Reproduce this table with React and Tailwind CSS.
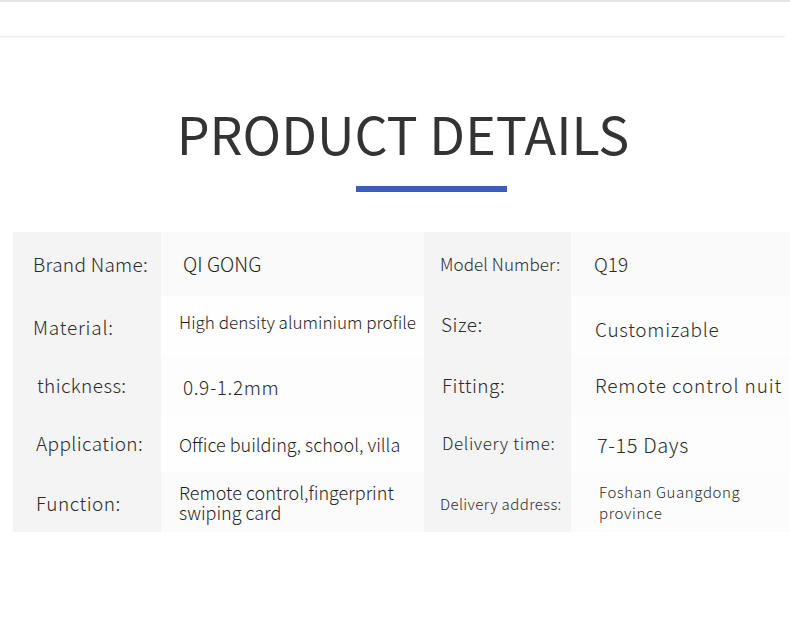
import React from "react";

const rows = [
  {
    h: "h-[64px]",
    bg: "bg-[#fafafa]",
    bg2: "bg-[#fafafa]",
    l1: <span className="pl-[20px] text-[19px] tracking-[0.3px]">Brand Name:</span>,
    v1: <span className="pl-[22px] text-[19.6px] text-[#1f1f1f]">QI GONG</span>,
    l2: <span className="pl-[16px] text-[17px] tracking-[0.1px]">Model Number:</span>,
    v2: <span className="pl-[23px] text-[19px]">Q19</span>,
  },
  {
    h: "h-[60px]",
    bg: "bg-[#fefefe]",
    bg2: "bg-[#fdfdfd]",
    l1: <span className="pl-[20px] pt-[2px] text-[19px] tracking-[0.8px]">Material:</span>,
    v1: <span className="pl-[18px] pb-[8px] text-[17.1px] text-[#1f1f1f]">High density aluminium profile</span>,
    l2: <span className="pl-[17px] pb-[4px] text-[19px] tracking-[0.5px]">Size:</span>,
    v2: <span className="pl-[24px] pt-[6px] text-[19px] tracking-[0.7px]">Customizable</span>,
  },
  {
    h: "h-[58px]",
    bg: "bg-[#fdfdfd]",
    bg2: "bg-[#fcfcfc]",
    l1: <span className="pl-[24px] text-[19px] tracking-[0.4px]">thickness:</span>,
    v1: <span className="pl-[22px] pt-[4px] text-[19px] tracking-[0.6px]">0.9-1.2mm</span>,
    l2: <span className="pl-[18px] text-[19px] tracking-[0.5px]">Fitting:</span>,
    v2: <span className="pl-[24px] text-[19px] tracking-[0.9px]">Remote control nuit</span>,
  },
  {
    h: "h-[58px]",
    bg: "bg-[#fefefe]",
    bg2: "bg-[#fdfdfd]",
    l1: <span className="pl-[23px] text-[19px] tracking-[0.4px]">Application:</span>,
    v1: <span className="pl-[18px] pt-[2px] text-[18px] text-[#1f1f1f]">Office building, school, villa</span>,
    l2: <span className="pl-[18px] text-[17px] tracking-[0.6px]">Delivery time:</span>,
    v2: <span className="pl-[26px] pt-[4px] text-[20px] tracking-[0.6px]">7-15 Days</span>,
  },
  {
    h: "h-[60px]",
    bg: "bg-[#fbfbfb]",
    bg2: "bg-[#fcfcfc]",
    l1: <span className="pl-[23px] pt-[2px] text-[19px] tracking-[0.5px]">Function:</span>,
    v1: (
      <span className="pl-[18px] text-[18px] leading-[20px] text-[#1f1f1f]">
        Remote control,fingerprint
        <br />
        swiping card
      </span>
    ),
    l2: <span className="pl-[16px] pt-[4px] text-[15px] tracking-[0.4px]">Delivery address:</span>,
    v2: (
      <span className="pl-[28px] text-[15px] leading-[21px] tracking-[0.6px]">
        Foshan Guangdong
        <br />
        province
      </span>
    ),
  },
];

export default function App() {
  return (
    <div
      className="w-[790px] h-[624px] bg-white text-[#2b2b2b] font-light overflow-hidden"
      style={{ fontFamily: '"Noto Sans CJK JP", "Noto Sans", sans-serif' }}
    >
      <div className="h-[2px] bg-[#e6e6e6]" />
      <div className="h-[34px]" />
      <div className="w-[785px] h-[2px] border-t border-[#ececec] border-b border-b-[#f7f7f7]" />
      <div className="flex flex-col items-center">
        <h1 className="mt-[62px] text-[52px] leading-[66px] font-normal text-[#333333] ml-[16px]">
          PRODUCT DETAILS
        </h1>
        <div className="mt-[20px] ml-[72px] w-[151px] h-[6px] bg-[#3b5fb7]" />
      </div>
      <div className="mt-[40px] flex flex-col">
        {rows.map((r, i) => (
          <div key={i} className={`flex ${r.h}`}>
            <div className="w-[13px]" />
            <div className="w-[148px] bg-[#f4f4f4] flex items-center whitespace-nowrap">{r.l1}</div>
            <div className={`w-[263px] ${r.bg} flex items-center whitespace-nowrap`}>{r.v1}</div>
            <div className="w-[147px] bg-[#f4f4f4] flex items-center whitespace-nowrap">{r.l2}</div>
            <div className={`w-[219px] ${r.bg2} flex items-center whitespace-nowrap`}>{r.v2}</div>
          </div>
        ))}
      </div>
    </div>
  );
}
